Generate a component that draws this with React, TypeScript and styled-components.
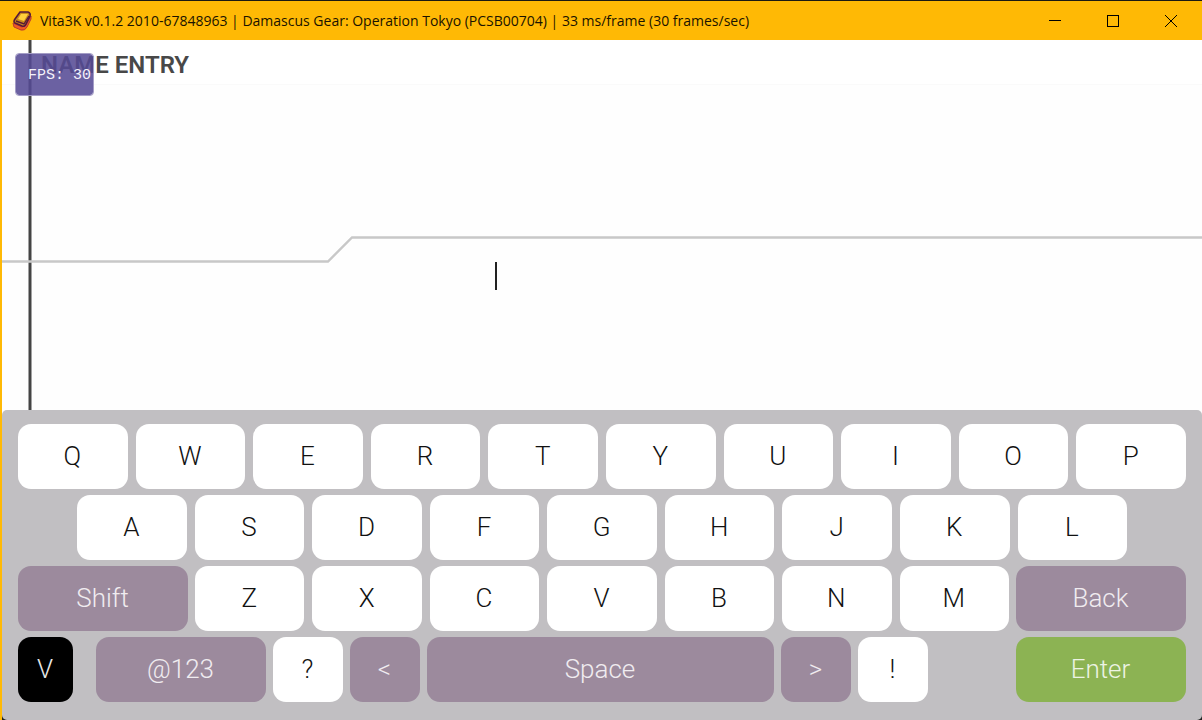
import React from "react";
import styled, { createGlobalStyle } from "styled-components";

const GlobalStyle = createGlobalStyle`
  * { box-sizing: border-box; }
  body { margin: 0; background: #ffffff; }
`;

const Window = styled.div`
  display: flex;
  flex-direction: column;
  min-height: 100vh;
  border-left: 2px solid #ffb905;
  font-family: Roboto, "Liberation Sans", sans-serif;
`;

const TitleBar = styled.header`
  display: flex;
  align-items: center;
  height: 40px;
  margin-left: -2px;
  padding: 0 2px 0 12px;
  gap: 8px;
  border-top: 1px solid #1c1a12;
  background: #ffb905;
`;

const AppIcon = styled.svg`
  width: 20px;
  height: 20px;
  flex: none;
`;

const WindowTitle = styled.h1`
  flex: 1;
  margin: 0;
  overflow: hidden;
  white-space: nowrap;
  font: 400 14px/20px "Open Sans", "Noto Sans", sans-serif;
  color: #1a1300;
`;

const WindowControls = styled.div`
  display: flex;
  align-self: stretch;
`;

const ControlButton = styled.button`
  display: flex;
  align-items: center;
  justify-content: center;
  width: 58px;
  padding: 0;
  border: 0;
  background: transparent;
  color: #000000;
`;

const Screen = styled.main`
  position: relative;
  flex: 1;
  display: flex;
  flex-direction: column;
  min-height: 370px;
  background: #fefefe;
`;

const Backdrop = styled.svg`
  position: absolute;
  inset: 0;
  width: 100%;
  height: 100%;
`;

const ScreenHeader = styled.div`
  height: 45px;
  padding: 9px 0 0 39px;
  border-bottom: 1px solid #fafafa;
  background: #ffffff;
`;

const EntryLabel = styled.label`
  position: relative;
  font-weight: 600;
  font-size: 24px;
  line-height: 32px;
  color: #484848;
`;

const EntryField = styled.div`
  position: relative;
  display: flex;
  align-items: center;
  height: 30px;
  margin: 176px 40px 0 493px;
`;

const Caret = styled.span`
  width: 2px;
  height: 28px;
  background: #222222;
`;

const NameInput = styled.input`
  flex: 1;
  min-width: 0;
  padding: 0;
  border: 0;
  outline: 0;
  background: transparent;
  font: 400 26px/30px Roboto, sans-serif;
`;

const FpsBadge = styled.div`
  position: absolute;
  top: 13px;
  left: 13px;
  width: 79px;
  height: 43px;
  padding-left: 12px;
  border: 1px solid #a49dc6;
  border-radius: 4px;
  background: rgba(85, 74, 148, 0.87);
  background-clip: padding-box;
  font: 400 15px/44px "Liberation Mono", monospace;
  white-space: nowrap;
  color: #f4f2fa;
`;

const KeyboardBase = styled.section`
  background: linear-gradient(#fefefe 50%, #222222 50%);
`;

const Keyboard = styled.div`
  display: flex;
  flex-direction: column;
  gap: 6px;
  padding: 14px 16px 18px;
  border-radius: 5px;
  background: #c1bfc2;
`;

const KeyRow = styled.div<{ $inset?: boolean; $gap?: number }>`
  display: flex;
  flex: 1;
  gap: ${(p) => p.$gap ?? 8}px;
  padding: 0 ${(p) => (p.$inset ? 59 : 0)}px;
`;

const palette = {
  letter: { face: "#ffffff", ink: "#111111" },
  action: { face: "#9c8a9d", ink: "#f0ecf0" },
  enter: { face: "#8cb353", ink: "#edf3e4" },
  close: { face: "#000000", ink: "#e8e8e8" },
};

type Tone = keyof typeof palette;

const Key = styled.button<{ $tone?: Tone; $width?: number }>`
  flex: ${(p) => (p.$width ? `0 0 ${p.$width}px` : "1 1 0")};
  min-width: 0;
  height: 65px;
  padding: 0 1px 2px 0;
  border: 0;
  border-radius: 13px;
  background: ${(p) => palette[p.$tone ?? "letter"].face};
  color: ${(p) => palette[p.$tone ?? "letter"].ink};
  font-family: Roboto, "Liberation Sans", sans-serif;
  font-weight: 300;
  font-size: 26px;
  line-height: 32px;
`;

const Spacer = styled.span<{ $width: number }>`
  flex: 0 0 ${(p) => p.$width}px;
`;

const Letters = ({ text }: { text: string }) => (
  <>
    {text.split("").map((letter) => (
      <Key key={letter}>{letter}</Key>
    ))}
  </>
);

export default function App() {
  return (
    <Window>
      <GlobalStyle />
      <TitleBar>
        <AppIcon viewBox="0 0 20 20" aria-hidden="true">
          <path d="M1 12L2 16L9 19Q13 20 15 16L19 8L19 5L14 14L10 16Z" fill="#ef5a25" stroke="#b83a30" />
          <path d="M8 1L16 1Q19 2 18 5L14 13Q13 16 10 15L3 12Q1 11 3 8Z" fill="#c98a1c" stroke="#56183a" strokeWidth="1.6" />
          <path d="M9 3L16 3L12 10L6 8Z" fill="#ffcf3c" />
          <path d="M4 10L12 13L17 5" fill="none" stroke="#56183a" strokeWidth="1.4" />
        </AppIcon>
        <WindowTitle>
          Vita3K v0.1.2 2010-67848963 | Damascus Gear: Operation Tokyo (PCSB00704) | 33 ms/frame (30 frames/sec)
        </WindowTitle>
        <WindowControls>
          <ControlButton aria-label="Minimize">
            <svg width="12" height="12" shapeRendering="crispEdges"><path d="M0 5.5H12" stroke="currentColor" /></svg>
          </ControlButton>
          <ControlButton aria-label="Maximize">
            <svg width="12" height="12" shapeRendering="crispEdges"><rect x="0.5" y="0.5" width="11" height="11" fill="none" stroke="currentColor" /></svg>
          </ControlButton>
          <ControlButton aria-label="Close">
            <svg width="12" height="12"><path d="M0 0L12 12M12 0L0 12" stroke="currentColor" /></svg>
          </ControlButton>
        </WindowControls>
      </TitleBar>

      <Screen>
        <ScreenHeader>
          <EntryLabel htmlFor="name">NAME ENTRY</EntryLabel>
        </ScreenHeader>
        <Backdrop aria-hidden="true">
          <line x1="28" y1="0" x2="28" y2="100%" stroke="#444444" strokeWidth="3" />
          <path d="M0 221.5H326L350 197.5H6000" fill="none" stroke="#c8c8c8" strokeWidth="2.4" />
        </Backdrop>
        <EntryField>
          <Caret />
          <NameInput id="name" type="text" />
        </EntryField>
        <FpsBadge>FPS: 30</FpsBadge>
      </Screen>

      <KeyboardBase aria-label="On-screen keyboard">
        <Keyboard>
          <KeyRow>
            <Letters text="QWERTYUIOP" />
          </KeyRow>
          <KeyRow $inset>
            <Letters text="ASDFGHJKL" />
          </KeyRow>
          <KeyRow $gap={7}>
            <Key $tone="action" $width={170}>Shift</Key>
            <KeyRow>
              <Letters text="ZXCVBNM" />
            </KeyRow>
            <Key $tone="action" $width={170}>Back</Key>
          </KeyRow>
          <KeyRow $gap={7}>
            <Key $tone="close" $width={55}>V</Key>
            <Spacer $width={9} />
            <Key $tone="action" $width={170}>@123</Key>
            <Key $width={70}>?</Key>
            <Key $tone="action" $width={70}>&lt;</Key>
            <Key $tone="action">Space</Key>
            <Key $tone="action" $width={70}>&gt;</Key>
            <Key $width={70}>!</Key>
            <Spacer $width={74} />
            <Key $tone="enter" $width={170}>Enter</Key>
          </KeyRow>
        </Keyboard>
      </KeyboardBase>
    </Window>
  );
}
